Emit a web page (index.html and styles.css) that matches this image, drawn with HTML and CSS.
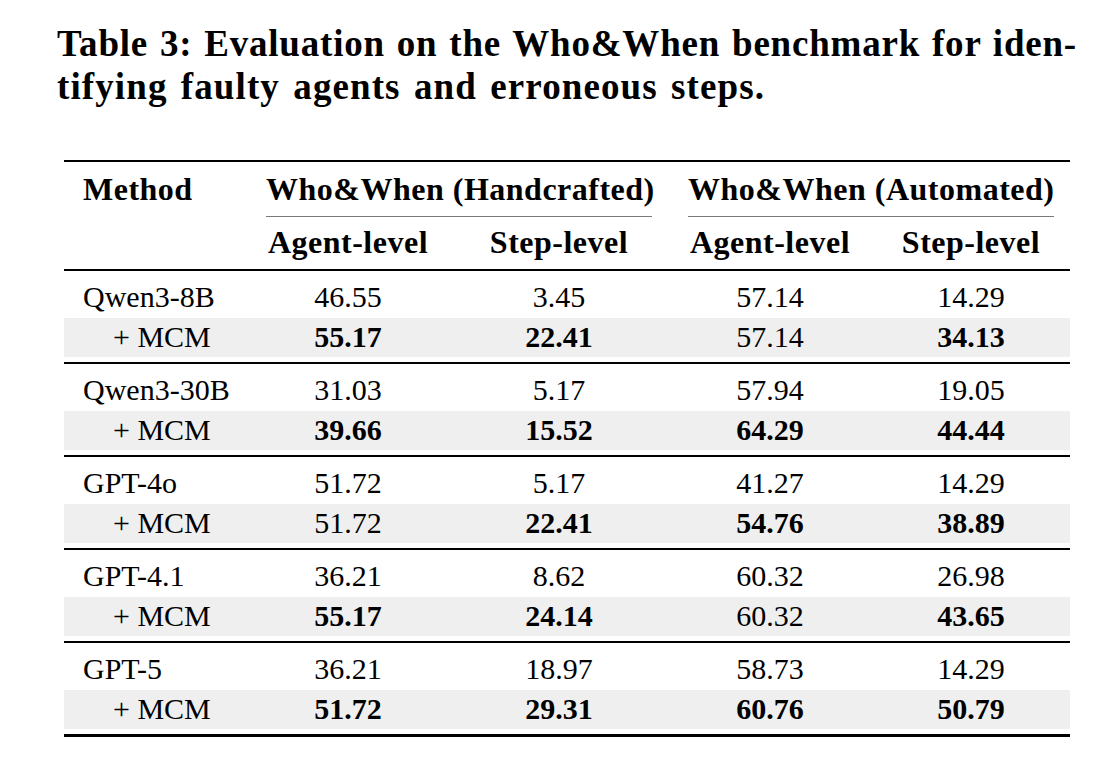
FILE: index.html
```html
<!DOCTYPE html>
<html lang="en">
<head>
<meta charset="utf-8">
<title>Table 3</title>
<link rel="stylesheet" href="styles.css">
</head>
<body>
<div class="caption">
  <span class="cap-line first">Table 3: Evaluation on the Who&amp;When benchmark for iden-</span>
  <span class="cap-line second">tifying faulty agents and erroneous steps.</span>
</div>

<div class="table">
  <div class="head">
    <div class="hrow hrow-top">
      <div class="hcell method">Method</div>
      <div class="hcell group-title hand">Who&amp;When (Handcrafted)</div>
      <div class="hcell group-title auto">Who&amp;When (Automated)</div>
    </div>
    <div class="hrow hrow-sub">
      <div class="hcell"></div>
      <div class="hcell num">Agent-level</div>
      <div class="hcell num">Step-level</div>
      <div class="hcell num">Agent-level</div>
      <div class="hcell num">Step-level</div>
    </div>
  </div>

  <div class="group">
    <div class="row base"><div class="cell name">Qwen3-8B</div><div class="cell num">46.55</div><div class="cell num">3.45</div><div class="cell num">57.14</div><div class="cell num">14.29</div></div>
    <div class="row mcm"><div class="cell name sub">+ MCM</div><div class="cell num b">55.17</div><div class="cell num b">22.41</div><div class="cell num">57.14</div><div class="cell num b">34.13</div></div>
  </div>
  <div class="group">
    <div class="row base"><div class="cell name">Qwen3-30B</div><div class="cell num">31.03</div><div class="cell num">5.17</div><div class="cell num">57.94</div><div class="cell num">19.05</div></div>
    <div class="row mcm"><div class="cell name sub">+ MCM</div><div class="cell num b">39.66</div><div class="cell num b">15.52</div><div class="cell num b">64.29</div><div class="cell num b">44.44</div></div>
  </div>
  <div class="group">
    <div class="row base"><div class="cell name">GPT-4o</div><div class="cell num">51.72</div><div class="cell num">5.17</div><div class="cell num">41.27</div><div class="cell num">14.29</div></div>
    <div class="row mcm"><div class="cell name sub">+ MCM</div><div class="cell num">51.72</div><div class="cell num b">22.41</div><div class="cell num b">54.76</div><div class="cell num b">38.89</div></div>
  </div>
  <div class="group">
    <div class="row base"><div class="cell name">GPT-4.1</div><div class="cell num">36.21</div><div class="cell num">8.62</div><div class="cell num">60.32</div><div class="cell num">26.98</div></div>
    <div class="row mcm"><div class="cell name sub">+ MCM</div><div class="cell num b">55.17</div><div class="cell num b">24.14</div><div class="cell num">60.32</div><div class="cell num b">43.65</div></div>
  </div>
  <div class="group last">
    <div class="row base"><div class="cell name">GPT-5</div><div class="cell num">36.21</div><div class="cell num">18.97</div><div class="cell num">58.73</div><div class="cell num">14.29</div></div>
    <div class="row mcm"><div class="cell name sub">+ MCM</div><div class="cell num b">51.72</div><div class="cell num b">29.31</div><div class="cell num b">60.76</div><div class="cell num b">50.79</div></div>
  </div>
</div>
</body>
</html>
```

FILE: styles.css
```css
html, body {
  margin: 0;
  padding: 0;
  background: #ffffff;
}

body {
  font-family: "Liberation Serif", "Times New Roman", serif;
  color: #000;
  width: 1116px;
  height: 768px;
  overflow: hidden;
}

.caption {
  margin: 22px 0 0 57px;
  width: 1020px;
  font-weight: 700;
  font-size: 37px;
  line-height: 43px;
  letter-spacing: 0.8px;
}

.cap-line {
  display: block;
}

.cap-line.first {
  text-align: justify;
  text-align-last: justify;
}

.cap-line.second {
  white-space: nowrap;
  letter-spacing: 1.1px;
  word-spacing: 3px;
}

.table {
  margin: 52px 0 0 64px;
  width: 1006px;
  border-top: 2px solid #000;
}

.hrow,
.row {
  display: grid;
  grid-template-columns: 182px 204px 218px 204px 198px;
}

.hcell {
  font-weight: 700;
  font-size: 32px;
  letter-spacing: 0.5px;
  white-space: nowrap;
}

.hrow-top {
  height: 55px;
}

.hrow-top .hcell {
  line-height: 54px;
}

.hrow-top .method {
  padding-left: 19px;
}

.group-title {
  grid-column: span 2;
  text-align: center;
  border-bottom: 1.3px solid #7a7a7a;
  height: 54px;
  margin: 0 16px 0 20px;
}

.hrow-sub {
  height: 52px;
}

.hrow-sub .hcell {
  line-height: 50px;
}

.num {
  text-align: center;
}

.group {
  border-top: 2px solid #000;
  padding-bottom: 5px;
}

.group.last {
  border-bottom: 3px solid #000;
}

.cell {
  font-size: 30px;
  white-space: nowrap;
}

.cell.b {
  font-weight: 700;
}

.row.base {
  padding-top: 5px;
  height: 42px;
}

.row.base .cell {
  line-height: 42px;
}

.row.mcm {
  background: #efefef;
  height: 39px;
}

.row.mcm .cell {
  line-height: 37px;
}

.name {
  padding-left: 19px;
}

.name.sub {
  padding-left: 49px;
}
```
